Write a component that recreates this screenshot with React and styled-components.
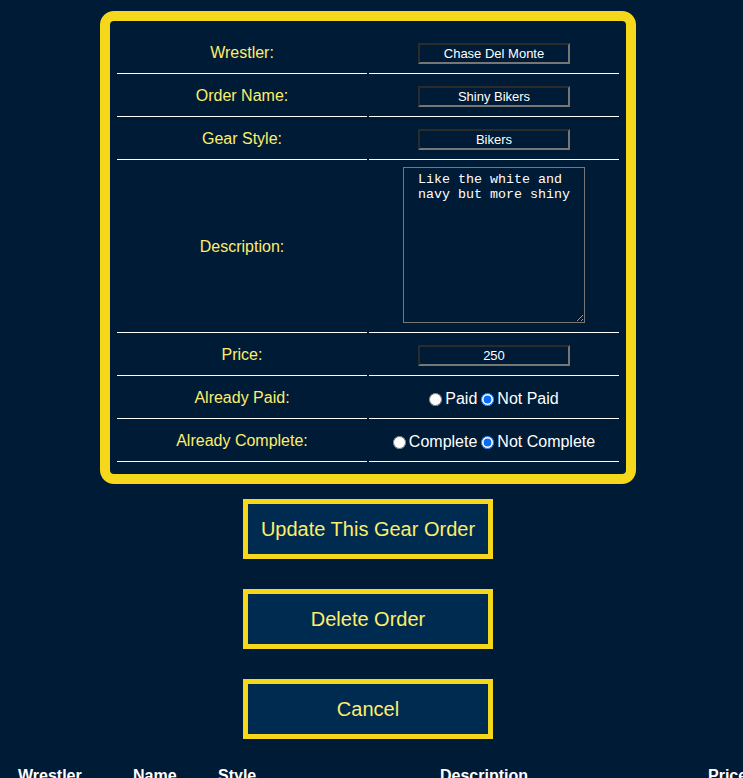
import React from 'react'
import styled, { createGlobalStyle } from 'styled-components'

const GlobalStyle = createGlobalStyle`
    html, body {
        margin: 0;
        padding: 0;
        background: #001b36;
        overflow: hidden;
    }
    body {
        font-family: "Liberation Sans", Arial, sans-serif;
    }
`

const Page = styled.div`
    width: 736px;
    display: flex;
    flex-direction: column;
    align-items: center;
    padding-top: 11px;
`

const Card = styled.form`
    border: 10px solid #f5d81b;
    border-radius: 14px;
    background: #001b36;
    padding: 10px 7px 10px;
    box-sizing: border-box;
    width: 536px;
`

const FieldGrid = styled.div`
    display: grid;
    grid-template-columns: 250px 250px;
    column-gap: 2px;
    row-gap: 2px;
    padding: 2px 0;
`

const Cell = styled.div`
    height: ${props => props.tall ? '170px' : '40px'};
    border-bottom: 1px solid #ffffff;
    display: flex;
    align-items: center;
    justify-content: center;
`

const Label = styled.label`
    color: #fcee6c;
    font-size: 16px;
`

const TextInput = styled.input`
    width: 152px;
    height: 21px;
    box-sizing: border-box;
    background: #001b36;
    color: #ffffff;
    text-align: center;
    font-family: "Liberation Sans", Arial, sans-serif;
    font-size: 13px;
    border: 2px solid;
    border-color: #2b2b2b #767676 #767676 #2b2b2b;
    padding: 1px 2px;
    outline: none;
`

const TextArea = styled.textarea`
    width: 182px;
    height: 156px;
    box-sizing: border-box;
    background: #001b36;
    color: #ffffff;
    border: 1px solid #767676;
    font-family: "Liberation Mono", "Courier New", monospace;
    font-size: 13.33px;
    line-height: 15px;
    padding: 4px 14px;
    margin-top: -4px;
    outline: none;
    resize: both;
`

const RadioGroup = styled.div`
    display: flex;
    align-items: center;
    color: #ffffff;
    font-size: 16px;
    padding-top: 2px;
`

const Radio = styled.input`
    margin: 0 3px 0 0;
    width: 13px;
    height: 13px;
    accent-color: #0a6cf5;
`

const RadioText = styled.span`
    margin-right: 4px;
`

const ActionButton = styled.button`
    width: 250px;
    height: 60px;
    margin-top: ${props => props.first ? '15px' : '30px'};
    border: 5px solid #f5d81b;
    background: #002b50;
    color: #fcee6c;
    font-family: "Liberation Sans", Arial, sans-serif;
    font-size: 20px;
    cursor: pointer;
`

const OrderTable = styled.div`
    align-self: flex-start;
    margin-top: 28px;
    display: grid;
    grid-template-columns: 115px 85px 222px 268px 80px;
    padding-left: 18px;
    white-space: nowrap;
`

const HeaderCell = styled.div`
    color: #ffffff;
    font-weight: bold;
    font-size: 16px;
`

const fields = [
    { label: 'Wrestler:', value: 'Chase Del Monte' },
    { label: 'Order Name:', value: 'Shiny Bikers' },
    { label: 'Gear Style:', value: 'Bikers' },
]

const App = () => {
    const [paid, setPaid] = React.useState(false)
    const [complete, setComplete] = React.useState(false)

    return (
        <>
            <GlobalStyle />
            <Page>
                <Card onSubmit={(e) => e.preventDefault()}>
                    <FieldGrid>
                        {fields.map(f => (
                            <React.Fragment key={f.label}>
                                <Cell><Label>{f.label}</Label></Cell>
                                <Cell><TextInput defaultValue={f.value} /></Cell>
                            </React.Fragment>
                        ))}
                        <Cell tall><Label>Description:</Label></Cell>
                        <Cell tall><TextArea defaultValue='Like the white and navy but more shiny' /></Cell>
                        <Cell><Label>Price:</Label></Cell>
                        <Cell><TextInput defaultValue='250' /></Cell>
                        <Cell><Label>Already Paid:</Label></Cell>
                        <Cell>
                            <RadioGroup>
                                <Radio type='radio' name='paid' checked={paid} onChange={() => setPaid(true)} />
                                <RadioText>Paid</RadioText>
                                <Radio type='radio' name='paid' checked={!paid} onChange={() => setPaid(false)} />
                                <span>Not Paid</span>
                            </RadioGroup>
                        </Cell>
                        <Cell><Label>Already Complete:</Label></Cell>
                        <Cell>
                            <RadioGroup>
                                <Radio type='radio' name='complete' checked={complete} onChange={() => setComplete(true)} />
                                <RadioText>Complete</RadioText>
                                <Radio type='radio' name='complete' checked={!complete} onChange={() => setComplete(false)} />
                                <span>Not Complete</span>
                            </RadioGroup>
                        </Cell>
                    </FieldGrid>
                </Card>
                <ActionButton first>Update This Gear Order</ActionButton>
                <ActionButton>Delete Order</ActionButton>
                <ActionButton>Cancel</ActionButton>
                <OrderTable>
                    <HeaderCell>Wrestler</HeaderCell>
                    <HeaderCell>Name</HeaderCell>
                    <HeaderCell>Style</HeaderCell>
                    <HeaderCell>Description</HeaderCell>
                    <HeaderCell>Price</HeaderCell>
                </OrderTable>
            </Page>
        </>
    )
}

export default App
